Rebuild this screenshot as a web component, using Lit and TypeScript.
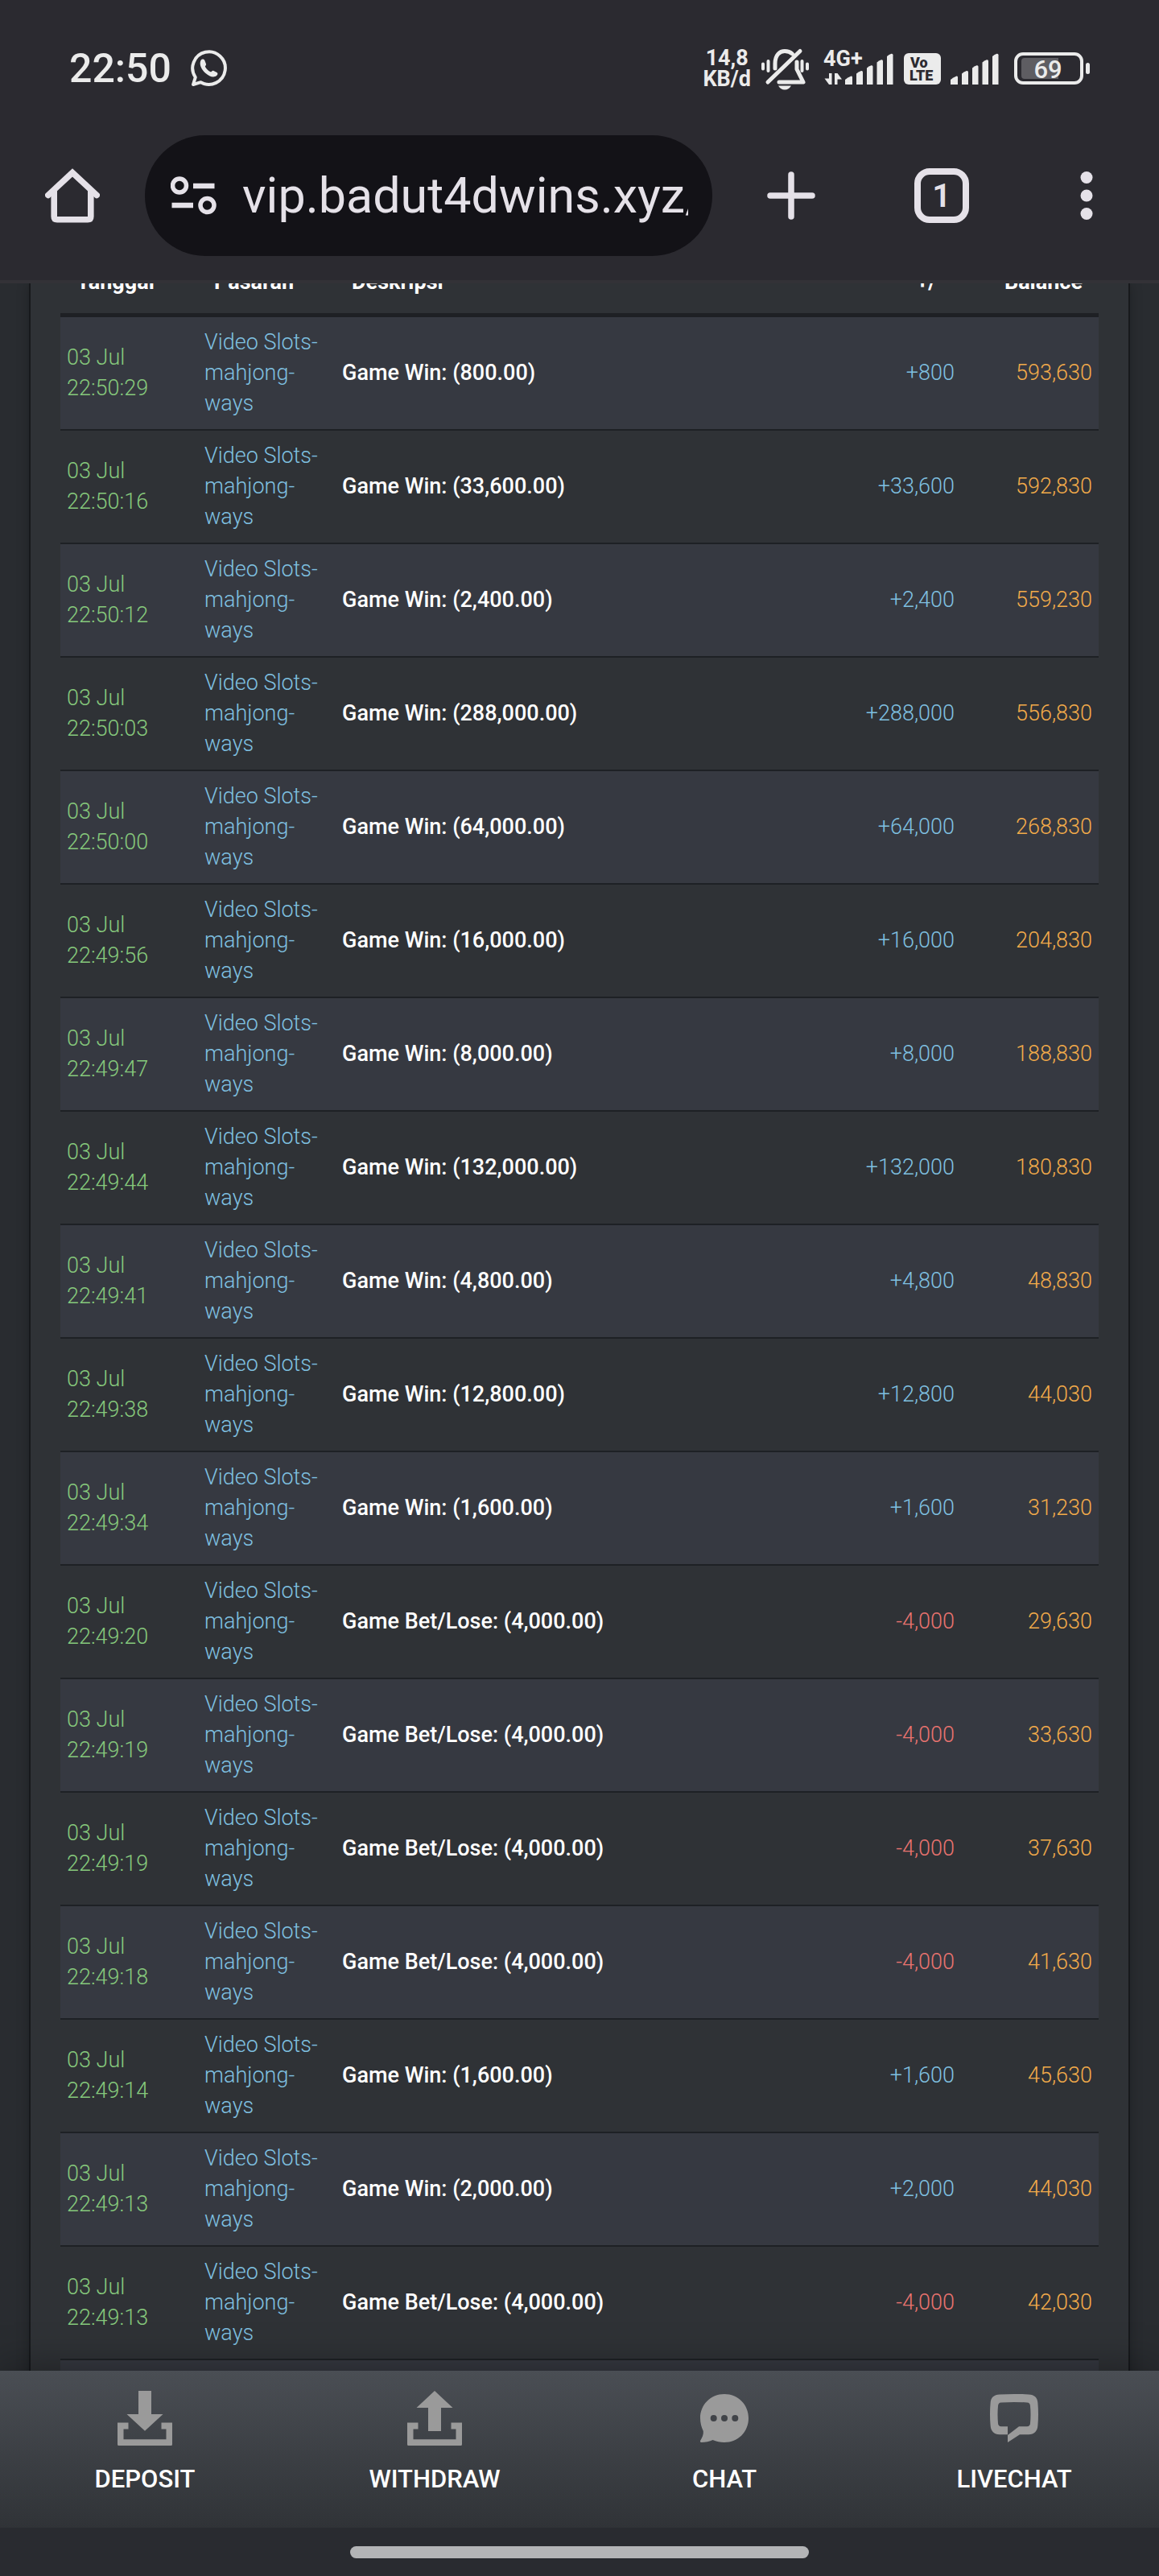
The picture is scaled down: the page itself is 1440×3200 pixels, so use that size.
import { LitElement, html, css, svg } from "lit";
import { customElement, property } from "lit/decorators.js";

type Entry = { time: string; amount: number; balance: number };

const ENTRIES: Entry[] = [
  { time: "22:50:29", amount: 800, balance: 593630 },
  { time: "22:50:16", amount: 33600, balance: 592830 },
  { time: "22:50:12", amount: 2400, balance: 559230 },
  { time: "22:50:03", amount: 288000, balance: 556830 },
  { time: "22:50:00", amount: 64000, balance: 268830 },
  { time: "22:49:56", amount: 16000, balance: 204830 },
  { time: "22:49:47", amount: 8000, balance: 188830 },
  { time: "22:49:44", amount: 132000, balance: 180830 },
  { time: "22:49:41", amount: 4800, balance: 48830 },
  { time: "22:49:38", amount: 12800, balance: 44030 },
  { time: "22:49:34", amount: 1600, balance: 31230 },
  { time: "22:49:20", amount: -4000, balance: 29630 },
  { time: "22:49:19", amount: -4000, balance: 33630 },
  { time: "22:49:19", amount: -4000, balance: 37630 },
  { time: "22:49:18", amount: -4000, balance: 41630 },
  { time: "22:49:14", amount: 1600, balance: 45630 },
  { time: "22:49:13", amount: 2000, balance: 44030 },
  { time: "22:49:13", amount: -4000, balance: 42030 },
];

const group = (n: number) => Math.abs(n).toLocaleString("en-US");

// Five rising signal bars, each with a slanted top.
const signalBars = (x: number) => svg`
  <g transform="translate(${x} 0)">
    <path d="M0 42q3-3 7.5-4.5q1.500-.3 1.500 1.500V48H0z"/>
    <path d="M14 34.500q2.500-2.500 6-3.500q2-.4 2 1.500V48H14z"/>
    <path d="M27 27.500q2.500-2.500 5.500-3.300q2-.4 2 1.500V48H27z"/>
    <path d="M39.500 20.500q2.500-2.500 5.500-3.300q2-.4 2 1.500V48H39.500z"/>
    <path d="M52 13q2.500-2.500 5.500-3.300q2-.4 2 1.500V48H52z"/>
  </g>`;

@customElement("status-bar")
export class StatusBar extends LitElement {
  static styles = css`
    :host { display: block; }
    .bar {
      display: flex;
      align-items: center;
      justify-content: space-between;
      min-height: 168px;
      box-sizing: border-box;
      padding: 2px 85px 0 86px;
      color: #ebebeb;
      font-family: Roboto, "Liberation Sans", sans-serif;
    }
    .left { display: flex; align-items: center; gap: 24px; }
    .right { display: flex; align-items: center; gap: 12px; }
    .clock { font-size: 50px; line-height: 58px; font-weight: 500; }
    .speed { font-size: 27px; line-height: 26px; font-weight: 700; text-align: center; }
    svg { display: block; fill: currentColor; }
    .line { fill: none; stroke: currentColor; stroke-linecap: round; stroke-linejoin: round; }
    .net { font-size: 27px; font-weight: 700; }
    .volte { font-size: 18px; font-weight: 900; fill: #2b2a30; }
    .charge { fill: #5e5d62; }
    .level { font-size: 31px; font-weight: 500; }
  `;

  render() {
    return html`
      <div class="bar">
        <div class="left">
          <span class="clock">22:50</span>
          <svg width="46" height="46" viewBox="0 0 46 46" aria-label="WhatsApp">
            <path class="line" stroke-width="4" d="M5.800 34A20.300 20.300 0 1 1 12.500 40.200L3 43Z"/>
            <path d="M12.500 13c1.500-2 4-2 5 .5l1.500 4c.5 1.300-1.500 2.500-1 3.500c1.500 3 4 5 6.500 6.200c1 .5 2.300-2 3.500-1.500l4.500 2.200c1.500.8 1 3-.5 4.200c-3.500 3-9 1-13.500-3c-5-4.500-8.500-11-6-16z"/>
          </svg>
        </div>
        <div class="right">
          <div class="speed">14,8<br />KB/d</div>
          <svg width="66" height="56" viewBox="0 0 66 56" aria-label="Silent">
            <g class="line">
              <path stroke-width="4" d="M3 22.500v6M9.500 19v12M51.500 19v12M58 22.500v6"/>
              <path stroke-width="5" d="M18 28V22C18 11 24 6.500 30 6.500c4 0 7 1.200 9.500 3.500"/>
              <path stroke-width="5" d="M49 6.500L9 45"/>
              <path stroke-width="5" d="M45 20v9L53 45H23"/>
            </g>
            <path d="M22 49.500H38Q35 54.500 30 54.500T22 49.500z"/>
          </svg>
          <svg width="88" height="56" viewBox="0 0 88 56" aria-label="4G+ signal">
            <text class="net" x="0" y="25">4G+</text>
            <path d="M7 34h3.500v14H7l-5.500-7.500H7zM14 48h3.500v-6.500H23L17.500 34H14z"/>
            ${signalBars(27)}
          </svg>
          <svg width="46" height="56" viewBox="0 0 46 56" aria-label="VoLTE">
            <rect y="9" width="46" height="39" rx="6"/>
            <text class="volte" x="8" y="27">Vo</text>
            <text class="volte" x="7" y="43">LTE</text>
          </svg>
          <svg width="60" height="56" viewBox="0 0 60 56" aria-label="Signal">${signalBars(0)}</svg>
          <svg width="102" height="56" viewBox="0 0 102 56" aria-label="Battery">
            <path class="charge" d="M20 15H62V41H20Q16 41 16 37V19Q16 15 20 15z"/>
            <rect class="line" stroke-width="4" x="9" y="10" width="82" height="36" rx="9"/>
            <rect x="96" y="21" width="5" height="14" rx="2.500"/>
            <text class="level" x="49" y="40" text-anchor="middle">69</text>
          </svg>
        </div>
      </div>
    `;
  }
}

@customElement("browser-toolbar")
export class BrowserToolbar extends LitElement {
  static styles = css`
    :host { display: block; }
    .bar {
      display: grid;
      grid-template-columns: 180px 1fr 196px 178px 181px;
      align-items: center;
      padding-bottom: 30px;
      border-bottom: 4px solid #333237;
      color: #e5e1e8;
      font-family: Roboto, "Liberation Sans", sans-serif;
    }
    button {
      display: grid;
      place-items: center;
      padding: 0;
      border: 0;
      background: none;
      color: inherit;
      font: inherit;
    }
    .address {
      display: flex;
      align-items: center;
      gap: 32px;
      min-width: 0;
      height: 150px;
      box-sizing: border-box;
      padding: 0 30px 0 32px;
      border-radius: 75px;
      background: #131217;
    }
    .address svg { flex: none; }
    .url {
      flex: 1;
      min-width: 0;
      padding: 0;
      border: 0;
      outline: 0;
      background: none;
      color: inherit;
      font-family: inherit;
      font-size: 61px;
      line-height: 76px;
    }
    svg { display: block; fill: none; stroke: currentColor; }
    .dots { fill: currentColor; stroke: none; }
    .tabs {
      display: grid;
      place-items: center;
      width: 68px;
      height: 68px;
      box-sizing: border-box;
      border: 8px solid currentColor;
      border-radius: 19px;
      font-size: 41px;
      line-height: 48px;
      font-weight: 600;
    }
  `;

  render() {
    return html`
      <div class="bar">
        <button aria-label="Home">
          <svg width="68" height="68" viewBox="0 0 68 68" stroke-width="7.600">
            <path d="M11.200 28V60Q11.200 63.800 15 63.800H53Q56.800 63.800 56.800 60V28"/>
            <path stroke-linecap="round" d="M3.800 33.500L34 5.500L64.200 33.500"/>
          </svg>
        </button>
        <label class="address">
          <svg width="57" height="50" viewBox="0 0 57 50" stroke-width="5.500" aria-label="Site information">
            <circle cx="11" cy="12.500" r="8.500"/>
            <path stroke-width="6.500" d="M28 13H54.500M1.500 37H28"/>
            <circle cx="45.500" cy="37" r="8.500"/>
          </svg>
          <input class="url" type="text" aria-label="Address" value="vip.badut4dwins.xyz/" />
        </label>
        <button aria-label="New tab">
          <svg width="60" height="60" viewBox="0 0 60 60" stroke-width="7.500" stroke-linecap="round">
            <path d="M4 30H56M30 4V56"/>
          </svg>
        </button>
        <button aria-label="Open tabs"><span class="tabs">1</span></button>
        <button aria-label="Menu">
          <svg class="dots" width="16" height="60" viewBox="0 0 16 60">
            <circle cx="8" cy="7.500" r="7.500"/><circle cx="8" cy="30" r="7.500"/><circle cx="8" cy="52.500" r="7.500"/>
          </svg>
        </button>
      </div>
    `;
  }
}

@customElement("history-table")
export class HistoryTable extends LitElement {
  @property({ attribute: false }) entries: Entry[] = [];

  static styles = css`
    :host { display: block; }
    table {
      width: 100%;
      table-layout: fixed;
      border-collapse: separate;
      border-spacing: 0;
      color: #fff;
      font-family: Roboto, "Liberation Sans", sans-serif;
      font-size: 27px;
      line-height: 38px;
    }
    .narrow { width: 171px; }
    th {
      padding: 20px;
      border-bottom: 5px solid #1e2024;
      text-align: left;
      font-weight: 700;
    }
    td {
      padding: 12px 8px 13px;
      border-bottom: 2px solid #1e2125;
      font-weight: 300;
    }
    tbody tr:nth-child(odd) { background: #363941; }
    th.num, td.num { text-align: right; }
    .time { color: #86c97c; }
    .market { color: #7fc0e0; }
    td.info { font-weight: 500; }
    .win { color: #7fc0e0; }
    .loss { color: #e8736f; }
    .balance { color: #f2ab4a; }
  `;

  render() {
    return html`
      <table>
        <colgroup>
          <col class="narrow" /><col class="narrow" /><col /><col class="narrow" /><col class="narrow" />
        </colgroup>
        <thead>
          <tr>
            <th>Tanggal</th><th>Pasaran</th><th>Deskripsi</th>
            <th class="num">+/-</th><th class="num">Balance</th>
          </tr>
        </thead>
        <tbody>
          ${this.entries.map((e) => html`
            <tr>
              <td class="time">03 Jul<br />${e.time}</td>
              <td class="market">Video Slots-<br />mahjong-<br />ways</td>
              <td class="info">Game ${e.amount > 0 ? "Win" : "Bet/Lose"}: (${group(e.amount)}.00)</td>
              <td class="num ${e.amount > 0 ? "win" : "loss"}">${e.amount > 0 ? "+" : "-"}${group(e.amount)}</td>
              <td class="num balance">${group(e.balance)}</td>
            </tr>`)}
          <tr><td colspan="5"></td></tr>
        </tbody>
      </table>
    `;
  }
}

@customElement("bottom-nav")
export class BottomNav extends LitElement {
  static styles = css`
    :host { display: block; position: relative; box-shadow: 0 0 50px rgba(0, 0, 0, 0.4); }
    nav {
      display: grid;
      grid-template-columns: repeat(4, 1fr);
      padding: 25px 0 42px;
      background: linear-gradient(#4a4e54, #303337);
    }
    a {
      display: flex;
      flex-direction: column;
      align-items: center;
      gap: 24px;
      color: #fff;
      text-decoration: none;
      font-family: Roboto, "Liberation Sans", sans-serif;
      font-size: 31px;
      line-height: 36px;
      font-weight: 500;
    }
    svg { display: block; fill: #9a9a9a; }
    .hole { fill: #404348; }
  `;

  render() {
    const tray = svg`<path d="M0 39.500H13.500V47.500H7.500V60.300H60.500V47.500H54.500V39.500H68V66.500Q68 68 66.500 68H1.500Q0 68 0 66.500Z"/>`;
    return html`
      <nav>
        <a href="#deposit">
          <svg width="68" height="68" viewBox="0 0 68 68">
            <path d="M26 0H42V29H56.500L34 49.800L11.500 29H26Z"/>${tray}
          </svg>
          DEPOSIT
        </a>
        <a href="#withdraw">
          <svg width="68" height="68" viewBox="0 0 68 68">
            <path d="M34 0L56.500 21H42V50H26V21H11.500Z"/>${tray}
          </svg>
          WITHDRAW
        </a>
        <a href="#chat">
          <svg width="68" height="68" viewBox="-4 -4 68 68">
            <path d="M30 0C47 0 60 13 60 30S47 60 30 60C25 60 20 59 15.500 57C12 59 6 60 1.500 60C0 60-.5 58.800.3 57.500C2.500 54 4.300 50 3.800 46C1.500 41 0 36 0 30C0 13 13 0 30 0Z"/>
            <g class="hole">
              <circle cx="16.700" cy="30" r="4"/><circle cx="30" cy="30" r="4"/><circle cx="43.300" cy="30" r="4"/>
            </g>
          </svg>
          CHAT
        </a>
        <a href="#livechat">
          <svg width="68" height="68" viewBox="-4 -4 68 68">
            <path d="M22 50.300H12C5 50 1 46 .6 39Q-.6 25 .6 11C1 4 5 .8 12 .4Q30-.6 48 .4C55 .8 59 4 59.400 11Q60.600 25 59.400 39C59 46 55 50 48 50.300H37L22 60V51L36 40.300H46Q50 40 50 36Q51 25 50 15Q50 10.600 46 10.400Q30 9.400 14 10.400Q10 10.600 10 15Q9 25 10 36Q10 40 14 40.300H22Z"/>
          </svg>
          LIVECHAT
        </a>
      </nav>
    `;
  }
}

@customElement("app-root")
export class AppRoot extends LitElement {
  static styles = css`
    :host { display: block; }
    .screen {
      display: grid;
      grid-template-rows: auto minmax(0, 1fr) auto auto;
      height: 100vh;
      background: #292c30;
    }
    .chrome { background: #2b2a30; }
    .viewport { overflow: hidden; padding: 0 38px; }
    .card {
      min-height: 100%;
      padding: 0 37px;
      background: #2f3236;
      box-shadow: 0 0 0 2px #17191c, 0 0 16px rgba(0, 0, 0, 0.3);
    }
    /* The page is scrolled so that the table head slips under the toolbar. */
    .scrolled { margin-top: -41px; }
    .card::before { content: ""; display: table; }
    .gesture { display: flex; justify-content: center; padding: 23px 0 22px; background: #292b30; position: relative; }
    .handle { width: 570px; height: 15px; border-radius: 8px; background: #b3b4b6; }
  `;

  render() {
    return html`
      <div class="screen">
        <header class="chrome">
          <status-bar></status-bar>
          <browser-toolbar></browser-toolbar>
        </header>
        <main class="viewport">
          <div class="card">
            <history-table class="scrolled" .entries=${ENTRIES}></history-table>
          </div>
        </main>
        <bottom-nav></bottom-nav>
        <div class="gesture"><div class="handle"></div></div>
      </div>
    `;
  }
}
